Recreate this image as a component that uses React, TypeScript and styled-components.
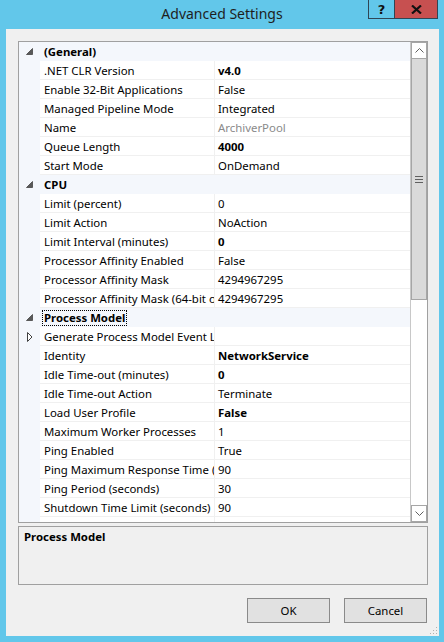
import styled, { createGlobalStyle } from "styled-components";

const GlobalStyle = createGlobalStyle`
    html, body {
        margin: 0;
        padding: 0;
        width: 444px;
        height: 642px;
        overflow: hidden;
        font-family: "Noto Sans", "Open Sans", sans-serif;
    }
`;

type Prop = { label: string; value?: string; bold?: boolean; dim?: boolean; expander?: boolean };
type Category = { name: string; focused?: boolean; props: Prop[] };

const categories: Category[] = [
    {
        name: "(General)",
        props: [
            { label: ".NET CLR Version", value: "v4.0", bold: true },
            { label: "Enable 32-Bit Applications", value: "False" },
            { label: "Managed Pipeline Mode", value: "Integrated" },
            { label: "Name", value: "ArchiverPool", dim: true },
            { label: "Queue Length", value: "4000", bold: true },
            { label: "Start Mode", value: "OnDemand" },
        ],
    },
    {
        name: "CPU",
        props: [
            { label: "Limit (percent)", value: "0" },
            { label: "Limit Action", value: "NoAction" },
            { label: "Limit Interval (minutes)", value: "0", bold: true },
            { label: "Processor Affinity Enabled", value: "False" },
            { label: "Processor Affinity Mask", value: "4294967295" },
            { label: "Processor Affinity Mask (64-bit option)", value: "4294967295" },
        ],
    },
    {
        name: "Process Model",
        focused: true,
        props: [
            { label: "Generate Process Model Event Log Entry", value: "", expander: true },
            { label: "Identity", value: "NetworkService", bold: true },
            { label: "Idle Time-out (minutes)", value: "0", bold: true },
            { label: "Idle Time-out Action", value: "Terminate" },
            { label: "Load User Profile", value: "False", bold: true },
            { label: "Maximum Worker Processes", value: "1" },
            { label: "Ping Enabled", value: "True" },
            { label: "Ping Maximum Response Time (seconds)", value: "90" },
            { label: "Ping Period (seconds)", value: "30" },
            { label: "Shutdown Time Limit (seconds)", value: "90" },
            { label: "", value: "" },
        ],
    },
];

const Window = styled.div`
    width: 444px;
    height: 642px;
    background: #62c7ea;
    display: flex;
    flex-direction: column;
    box-sizing: border-box;
`;

const TitleBar = styled.div`
    height: 29px;
    position: relative;
    display: flex;
    align-items: center;
    justify-content: center;
    font-size: 14px;
    color: #1e1e1e;
    padding-bottom: 2px;
    box-sizing: border-box;
`;

const CaptionButtons = styled.div`
    position: absolute;
    top: 0;
    right: 6px;
    display: flex;
`;

const CaptionButton = styled.div<{ $close?: boolean }>`
    height: 19px;
    width: ${(p) => (p.$close ? "43px" : "27px")};
    box-sizing: border-box;
    background: ${(p) => (p.$close ? "#c75050" : "transparent")};
    border: 1px solid #2f4655;
    border-top: none;
    border-left: ${(p) => (p.$close ? "none" : "1px solid #2f4655")};
    display: flex;
    align-items: center;
    justify-content: center;
    font-family: "DejaVu Sans", sans-serif;
    font-weight: bold;
    font-size: 13px;
    color: #111;
`;

const Client = styled.div`
    flex: 1;
    margin: 0 5px 6px 6px;
    background: #f0f0f0;
    padding: 12px 11px 0 12px;
    display: flex;
    flex-direction: column;
    position: relative;
`;

const Grid = styled.div`
    height: 482px;
    border: 1px solid #a0a0a0;
    background: #fff;
    display: flex;
    box-sizing: border-box;
`;

const Rows = styled.div`
    flex: 1;
    overflow: hidden;
    font-size: 11.4px;
    color: #000;
`;

const CategoryRow = styled.div`
    height: 19px;
    display: flex;
    align-items: center;
    background: #f4f7fc;
`;

const Gutter = styled.div`
    width: 21px;
    flex: none;
    align-self: stretch;
    background: #f4f7fc;
    display: flex;
    align-items: center;
    justify-content: center;
`;

const CategoryName = styled.span<{ $focused?: boolean }>`
    font-weight: bold;
    margin-left: 2px;
    padding: 0 2px;
    line-height: 16px;
    outline: ${(p) => (p.$focused ? "1px dotted #000" : "none")};
    outline-offset: -1px;
`;

const PropRow = styled.div`
    height: 19px;
    display: flex;
    align-items: stretch;
`;

const Cell = styled.div<{ $bold?: boolean; $dim?: boolean; $value?: boolean }>`
    box-sizing: border-box;
    border-bottom: 1px solid #f0f0f0;
    ${(p) => (p.$value ? "flex: 1;" : "width: 175px; flex: none; border-right: 1px solid #f0f0f0;")}
    padding-left: ${(p) => (p.$value ? "3px" : "4px")};
    white-space: nowrap;
    overflow: hidden;
    display: flex;
    align-items: center;
    font-weight: ${(p) => (p.$bold ? "bold" : "normal")};
    color: ${(p) => (p.$dim ? "#8a8a8a" : "#000")};
`;

const ScrollBar = styled.div`
    width: 17px;
    flex: none;
    display: flex;
    flex-direction: column;
    background: #fff;
    border-left: 1px solid #c8c8c8;
    box-sizing: border-box;
`;

const ScrollArrow = styled.div`
    height: 17px;
    flex: none;
    border: 1px solid #a6a6a6;
    box-sizing: border-box;
    display: flex;
    align-items: center;
    justify-content: center;
    background: #fff;
`;

const Thumb = styled.div`
    height: 241px;
    flex: none;
    background: #dadada;
    border: 1px solid #a6a6a6;
    border-top: none;
    box-sizing: border-box;
    display: flex;
    align-items: center;
    justify-content: center;
`;

const Track = styled.div`
    flex: 1;
`;

const Description = styled.div`
    margin-top: 3px;
    height: 59px;
    border: 1px solid #a0a0a0;
    box-sizing: border-box;
    padding: 2px 5px;
    font-size: 11.4px;
    font-weight: bold;
    color: #000;
`;

const Buttons = styled.div`
    display: flex;
    justify-content: flex-end;
    gap: 14px;
    margin-top: 13px;
    padding-right: 1px;
`;

const Button = styled.button`
    width: 83px;
    height: 25px;
    background: #e1e1e1;
    border: 1px solid #8a8a8a;
    font-family: "Noto Sans", sans-serif;
    font-size: 11.4px;
    color: #000;
    padding: 0;
`;

const Grip = styled.svg`
    position: absolute;
    right: 1px;
    bottom: 1px;
`;

function CollapseGlyph() {
    return (
        <svg width="7" height="7" viewBox="0 0 7 7">
            <path d="M6.5 0.5 L6.5 6.5 L0.5 6.5 Z" fill="#595959" stroke="#595959" strokeWidth="1" />
        </svg>
    );
}

function ExpandGlyph() {
    return (
        <svg width="6" height="10" viewBox="0 0 6 10">
            <path d="M0.5 0.5 L5 5 L0.5 9.5 Z" fill="#fff" stroke="#404040" strokeWidth="1" />
        </svg>
    );
}

export default function App() {
    return (
        <Window>
            <GlobalStyle />
            <TitleBar>
                Advanced Settings
                <CaptionButtons>
                    <CaptionButton>?</CaptionButton>
                    <CaptionButton $close>
                        <svg width="11" height="9" viewBox="0 0 11 9">
                            <path d="M1 0.5 L10 8.5 M10 0.5 L1 8.5" stroke="#111" strokeWidth="2.2" />
                        </svg>
                    </CaptionButton>
                </CaptionButtons>
            </TitleBar>
            <Client>
                <Grid>
                    <Rows>
                        {categories.map((c) => (
                            <div key={c.name}>
                                <CategoryRow>
                                    <Gutter>
                                        <CollapseGlyph />
                                    </Gutter>
                                    <CategoryName $focused={c.focused}>{c.name}</CategoryName>
                                </CategoryRow>
                                {c.props.map((p, i) => (
                                    <PropRow key={i}>
                                        <Gutter>{p.expander && <ExpandGlyph />}</Gutter>
                                        <Cell>{p.label}</Cell>
                                        <Cell $value $bold={p.bold} $dim={p.dim}>
                                            {p.value}
                                        </Cell>
                                    </PropRow>
                                ))}
                            </div>
                        ))}
                    </Rows>
                    <ScrollBar>
                        <ScrollArrow>
                            <svg width="9" height="5" viewBox="0 0 9 5">
                                <path d="M0.5 4.5 L4.5 0.5 L8.5 4.5" fill="none" stroke="#606060" strokeWidth="1" />
                            </svg>
                        </ScrollArrow>
                        <Thumb>
                            <svg width="8" height="7" viewBox="0 0 8 7">
                                <path d="M0 0.5 H8 M0 3.5 H8 M0 6.5 H8" stroke="#606060" strokeWidth="1" />
                            </svg>
                        </Thumb>
                        <Track />
                        <ScrollArrow>
                            <svg width="9" height="5" viewBox="0 0 9 5">
                                <path d="M0.5 0.5 L4.5 4.5 L8.5 0.5" fill="none" stroke="#606060" strokeWidth="1" />
                            </svg>
                        </ScrollArrow>
                    </ScrollBar>
                </Grid>
                <Description>Process Model</Description>
                <Buttons>
                    <Button>OK</Button>
                    <Button>Cancel</Button>
                </Buttons>
                <Grip width="8" height="8" viewBox="0 0 8 8">
                    <rect x="6" y="0" width="1" height="1" fill="#b0b0b0" />
                    <rect x="3" y="3" width="1" height="1" fill="#b0b0b0" />
                    <rect x="6" y="3" width="1" height="1" fill="#b0b0b0" />
                    <rect x="0" y="6" width="1" height="1" fill="#b0b0b0" />
                    <rect x="3" y="6" width="1" height="1" fill="#b0b0b0" />
                    <rect x="6" y="6" width="1" height="1" fill="#b0b0b0" />
                </Grip>
            </Client>
        </Window>
    );
}
